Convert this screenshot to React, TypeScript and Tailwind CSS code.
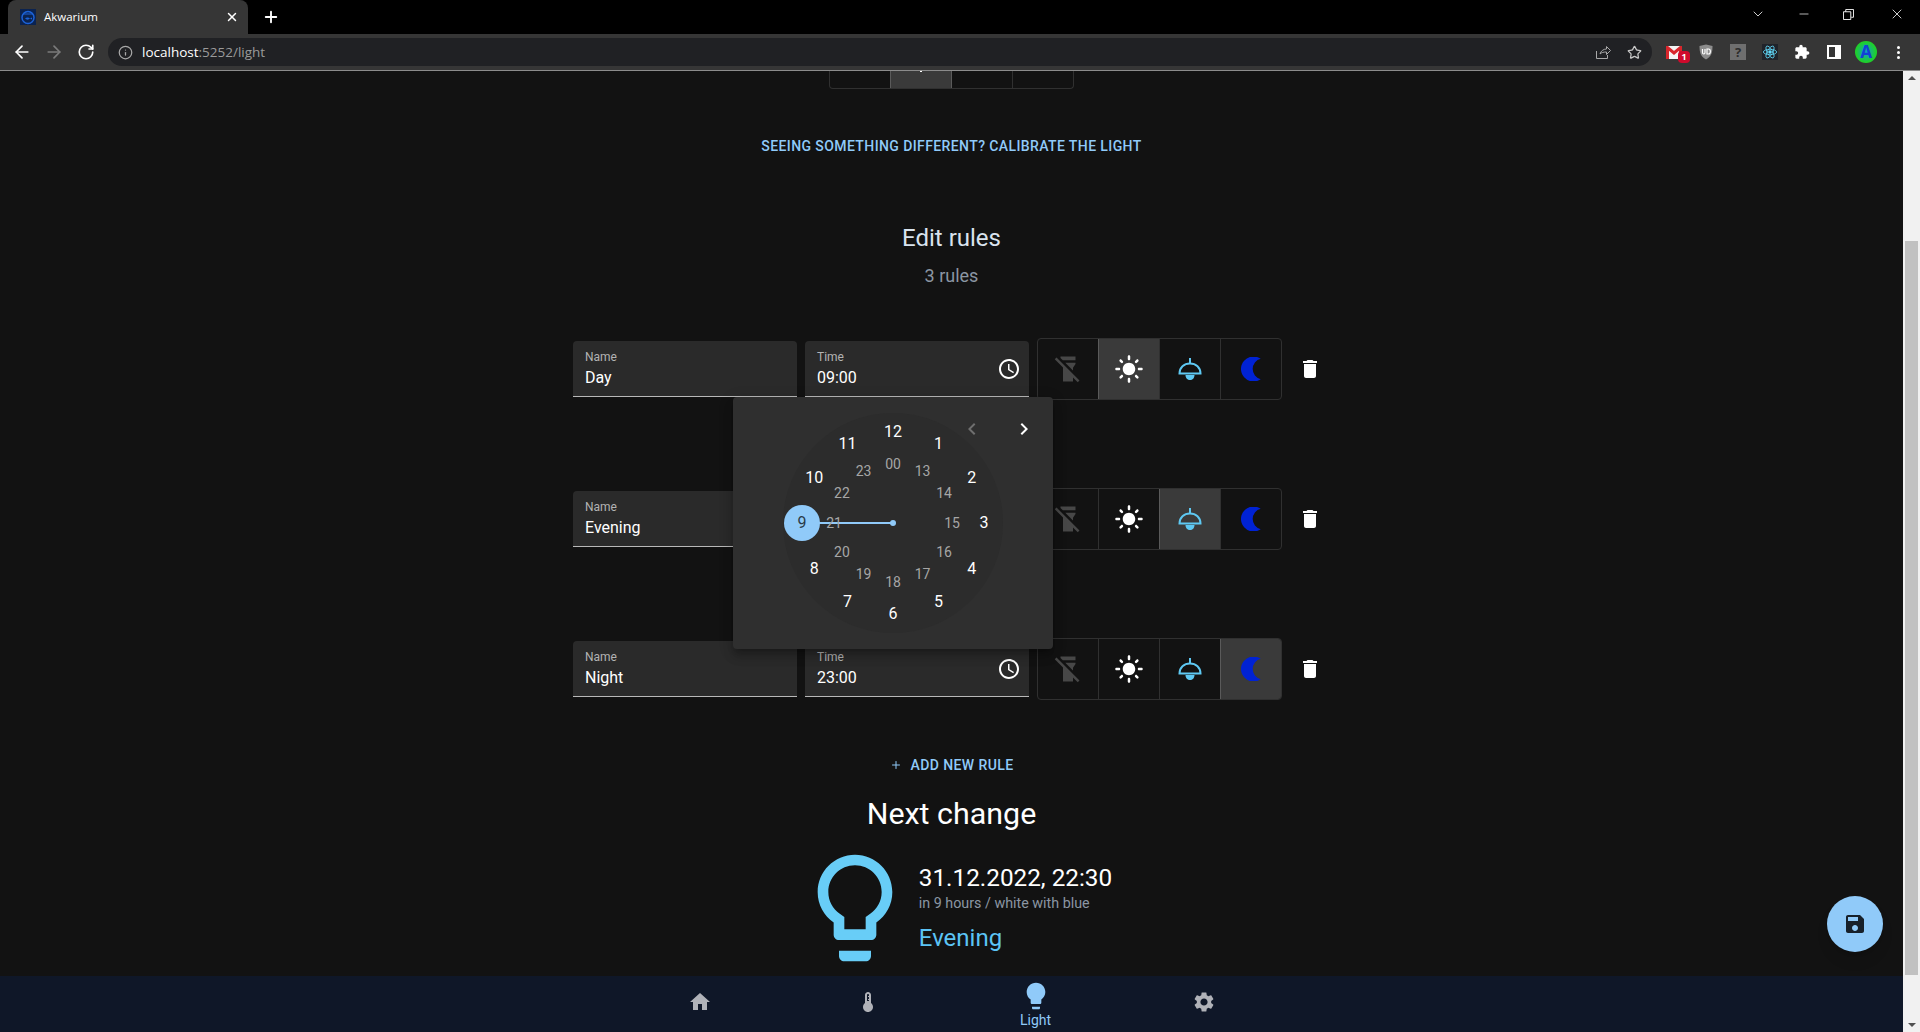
import React from 'react';
import { ArrowLeft, ArrowRight, RotateCw, Info, Star, Plus, X, ChevronDown, Minus } from 'lucide-react';

const paths = {
  sun: 'M12 7c-2.76 0-5 2.24-5 5s2.24 5 5 5 5-2.24 5-5-2.24-5-5-5zM2 13h2c.55 0 1-.45 1-1s-.45-1-1-1H2c-.55 0-1 .45-1 1s.45 1 1 1zm18 0h2c.55 0 1-.45 1-1s-.45-1-1-1h-2c-.55 0-1 .45-1 1s.45 1 1 1zM11 2v2c0 .55.45 1 1 1s1-.45 1-1V2c0-.55-.45-1-1-1s-1 .45-1 1zm0 18v2c0 .55.45 1 1 1s1-.45 1-1v-2c0-.55-.45-1-1-1s-1 .45-1 1zM5.99 4.58c-.39-.39-1.03-.39-1.41 0-.39.39-.39 1.03 0 1.41l1.06 1.06c.39.39 1.03.39 1.41 0s.39-1.03 0-1.41L5.99 4.58zm12.37 12.37c-.39-.39-1.03-.39-1.41 0-.39.39-.39 1.03 0 1.41l1.06 1.06c.39.39 1.03.39 1.41 0 .39-.39.39-1.03 0-1.41l-1.06-1.06zm1.06-10.96c.39-.39.39-1.03 0-1.41-.39-.39-1.03-.39-1.41 0l-1.06 1.06c-.39.39-.39 1.03 0 1.41s1.03.39 1.41 0l1.06-1.06zM7.05 18.36c.39-.39.39-1.03 0-1.41-.39-.39-1.03-.39-1.41 0l-1.06 1.06c-.39.39-.39 1.03 0 1.41s1.03.39 1.41 0l1.06-1.06z',
  flashOff: 'M18 5V2H6v1.17L7.83 5zM16 11l2-3V7H9.83L16 13.17zM2.81 2.81 1.39 4.22 8 10.83V22h8v-3.17l3.78 3.78 1.41-1.41L2.81 2.81z',
  trash: 'M6 19c0 1.1.9 2 2 2h8c1.1 0 2-.9 2-2V7H6v12zM19 4h-3.5l-1-1h-5l-1 1H5v2h14V4z',
  clock: 'M11.99 2C6.47 2 2 6.48 2 12s4.47 10 9.99 10C17.52 22 22 17.52 22 12S17.52 2 11.99 2zM12 20c-4.42 0-8-3.58-8-8s3.58-8 8-8 8 3.58 8 8-3.58 8-8 8zm.5-13H11v6l5.25 3.15.75-1.23-4.5-2.67z',
  bulbOutline: 'M9 21c0 .55.45 1 1 1h4c.55 0 1-.45 1-1v-1H9v1zm3-19C8.14 2 5 5.14 5 9c0 2.38 1.19 4.47 3 5.74V17c0 .55.45 1 1 1h6c.55 0 1-.45 1-1v-2.26c1.81-1.27 3-3.36 3-5.74 0-3.86-3.14-7-7-7zm2.85 11.1l-.85.6V16h-4v-2.3l-.85-.6C7.8 12.16 7 10.63 7 9c0-2.76 2.24-5 5-5s5 2.24 5 5c0 1.63-.8 3.16-2.15 4.1z',
  bulb: 'M9 21c0 .5.4 1 1 1h4c.6 0 1-.5 1-1v-1H9v1zm3-19C8.1 2 5 5.1 5 9c0 2.4 1.2 4.5 3 5.7V17c0 .5.4 1 1 1h6c.6 0 1-.5 1-1v-2.3c1.8-1.3 3-3.4 3-5.7 0-3.9-3.1-7-7-7z',
  home: 'M10 20v-6h4v6h5v-8h3L12 3 2 12h3v8z',
  thermo: 'M15 13V5c0-1.66-1.34-3-3-3S9 3.34 9 5v8c-1.21.91-2 2.37-2 4 0 2.76 2.24 5 5 5s5-2.24 5-5c0-1.63-.79-3.09-2-4zm-4-2V5c0-.55.45-1 1-1s1 .45 1 1v1h-1v1h1v2h-1v1h1v1h-2z',
  gear: 'M19.14 12.94c.04-.3.06-.61.06-.94 0-.32-.02-.64-.07-.94l2.03-1.58c.18-.14.23-.41.12-.61l-1.92-3.32c-.12-.22-.37-.29-.59-.22l-2.39.96c-.5-.38-1.03-.7-1.62-.94l-.36-2.54c-.04-.24-.24-.41-.48-.41h-3.84c-.24 0-.43.17-.47.41l-.36 2.54c-.59.24-1.13.57-1.62.94l-2.39-.96c-.22-.08-.47 0-.59.22L2.74 8.87c-.12.21-.08.47.12.61l2.03 1.58c-.05.3-.09.63-.09.94s.02.64.07.94l-2.03 1.58c-.18.14-.23.41-.12.61l1.92 3.32c.12.22.37.29.59.22l2.39-.96c.5.38 1.03.7 1.62.94l.36 2.54c.05.24.24.41.48.41h3.84c.24 0 .44-.17.47-.41l.36-2.54c.59-.24 1.13-.56 1.62-.94l2.39.96c.22.08.47 0 .59-.22l1.92-3.32c.12-.22.07-.47-.12-.61l-2.01-1.58zM12 15.6c-1.98 0-3.6-1.62-3.6-3.6s1.62-3.6 3.6-3.6 3.6 1.62 3.6 3.6-1.62 3.6-3.6 3.6z',
  save: 'M17 3H5c-1.11 0-2 .9-2 2v14c0 1.1.89 2 2 2h14c1.1 0 2-.9 2-2V7l-4-4zm-5 16c-1.66 0-3-1.34-3-3s1.34-3 3-3 3 1.34 3 3-1.34 3-3 3zm3-10H5V5h10v4z',
  left: 'M15.41 7.41 14 6l-6 6 6 6 1.41-1.41L10.83 12z',
  right: 'M10 6 8.59 7.41 13.17 12l-4.58 4.59L10 18l6-6z',
  puzzle: 'M20.5 11H19V7c0-1.1-.9-2-2-2h-4V3.5C13 2.12 11.88 1 10.5 1S8 2.12 8 3.5V5H4c-1.1 0-1.99.9-1.99 2v3.8H3.5c1.49 0 2.7 1.21 2.7 2.7s-1.21 2.7-2.7 2.7H2V20c0 1.1.9 2 2 2h3.8v-1.5c0-1.49 1.21-2.7 2.7-2.7 1.49 0 2.7 1.21 2.7 2.7V22H17c1.1 0 2-.9 2-2v-4h1.5c1.38 0 2.5-1.12 2.5-2.5S21.88 11 20.5 11z',
};

const Icon: React.FC<{ d: string; className?: string }> = ({ d, className }) => (
  <svg viewBox="0 0 24 24" fill="currentColor" className={className}>
    <path d={d} />
  </svg>
);

const LampIcon = () => (
  <svg viewBox="0 0 24 24" className="w-6 h-6 text-[#5ec8f2]" fill="none" stroke="currentColor" strokeWidth="2">
    <path d="M12 1v5" />
    <path d="M1.500 16.500C1.500 10.500 6 6.500 12 6.500s10.500 4 10.500 10z" />
    <path d="M7.500 18h9c0 3-2 5-4.500 5s-4.500-2-4.500-5z" fill="currentColor" stroke="none" />
  </svg>
);

const MoonIcon = () => (
  <svg viewBox="0 0 24 24" className="w-6 h-6 text-[#0022d4]" fill="currentColor">
    <path d="M21.700 1.800A12.500 12.500 0 1 0 21.700 22.200A10.500 10.500 0 0 1 21.700 1.800Z" />
  </svg>
);

const Field: React.FC<{ label: string; value: string; clock?: boolean }> = ({ label, value, clock }) => (
  <div className="w-[224px] h-[56px] bg-[#2a2a2a] rounded-t border-b border-[#b8b8b8] pl-3 pr-[8px] flex items-center justify-between">
    <div className="flex flex-col pt-[3px]">
      <span className="text-[12px] leading-[14px] text-[#b3b3b3]">{label}</span>
      <span className="mt-[2px] text-[16px] leading-[24px] text-white">{value}</span>
    </div>
    {clock && <Icon d={paths.clock} className="w-6 h-6 text-white" />}
  </div>
);

const ToggleGroup: React.FC<{ active: number }> = ({ active }) => {
  const items = [
    <Icon key="a" d={paths.flashOff} className="w-[30px] h-[30px] text-[#474747]" />,
    <Icon key="b" d={paths.sun} className="w-[30px] h-[30px] text-white" />,
    <LampIcon key="c" />,
    <MoonIcon key="d" />,
  ];
  return (
    <div className="flex h-[62px] w-[245px] rounded border border-[#303030] overflow-hidden">
      {items.map((item, i) => (
        <div
          key={i}
          className={
            'flex-1 flex items-center justify-center ' +
            (i > 0 ? 'border-l ' : '') +
            (i === active ? 'bg-[#3a3a3a] border-[#5a5a5a]' : 'border-[#303030]')
          }
        >
          {item}
        </div>
      ))}
    </div>
  );
};

const Rule: React.FC<{ name: string; time: string; active: number }> = ({ name, time, active }) => (
  <div className="flex items-center gap-2 h-[62px]">
    <Field label="Name" value={name} />
    <Field label="Time" value={time} clock />
    <ToggleGroup active={active} />
    <button className="w-10 h-10 flex items-center justify-center text-white">
      <Icon d={paths.trash} className="w-6 h-6" />
    </button>
  </div>
);

const ClockNumber: React.FC<{ value: string; pos: number; radius: number; inner?: boolean; selected?: boolean }> = ({
  value,
  pos,
  radius,
  inner,
  selected,
}) => {
  const angle = (pos * Math.PI) / 6;
  return (
    <span
      className={
        'absolute w-8 h-8 -ml-4 -mt-4 flex items-center justify-center ' +
        (selected ? 'text-[16px] text-[#2a3a48]' : inner ? 'text-[14px] text-[#a6a6a6]' : 'text-[16px] text-white')
      }
      style={{ left: 110 + radius * Math.sin(angle), top: 110 - radius * Math.cos(angle) }}
    >
      {value}
    </span>
  );
};

const TimePopup = () => (
  <div className="absolute left-[160px] top-[59px] w-[320px] h-[252px] bg-[#2f2f2f] rounded shadow-[0_5px_5px_-3px_rgba(0,0,0,0.2),0_8px_10px_1px_rgba(0,0,0,0.14),0_3px_14px_2px_rgba(0,0,0,0.12)] flex items-center justify-center">
    <div className="relative w-[220px] h-[220px] rounded-full bg-[#2c2c2c]">
      <div className="absolute left-[36px] top-[109px] w-[74px] h-[2px] bg-[#90caf9]" />
      <div className="absolute left-[107px] top-[107px] w-[6px] h-[6px] rounded-full bg-[#90caf9]" />
      <div className="absolute left-[1px] top-[92px] w-9 h-9 rounded-full bg-[#90caf9]" />
      {['12', '1', '2', '3', '4', '5', '6', '7', '8', '9', '10', '11'].map((n, i) => (
        <ClockNumber key={n} value={n} pos={i} radius={91} selected={n === '9'} />
      ))}
      {['00', '13', '14', '15', '16', '17', '18', '19', '20', '21', '22', '23'].map((n, i) => (
        <ClockNumber key={n} value={n} pos={i} radius={59} inner />
      ))}
    </div>
    <Icon d={paths.left} className="absolute left-[227px] top-[20px] w-6 h-6 text-[#6f6f6f]" />
    <Icon d={paths.right} className="absolute left-[279px] top-[20px] w-6 h-6 text-white" />
  </div>
);

const NavItem: React.FC<{ d: string; label?: string; active?: boolean; iconClass: string }> = ({ d, label, active, iconClass }) => (
  <div className={'w-[168px] flex flex-col items-center justify-center ' + (active ? 'text-[#90caf9]' : 'text-[#b0b2b8] pb-[4px]')}>
    <Icon d={d} className={iconClass} />
    {label && <span className="text-[14px] leading-[16px] mt-[1px]">{label}</span>}
  </div>
);

const ExtSlot: React.FC<{ children: React.ReactNode }> = ({ children }) => (
  <div className="relative w-8 h-full flex items-center justify-center">{children}</div>
);

const BrowserChrome = () => (
  <div className="h-[71px] shrink-0 bg-black font-['Open_Sans','Liberation_Sans',sans-serif]">
    <div className="h-[34px] flex items-end">
      <div className="ml-2 w-[240px] h-[34px] bg-[#363636] rounded-t-lg flex items-center pl-3 pr-[9px]">
        <svg viewBox="0 0 16 16" className="w-4 h-4" fill="none">
          <rect width="16" height="16" fill="#0b2350" />
          <circle cx="8" cy="8.500" r="6" stroke="#1c62d8" strokeWidth="1.500" />
          <path d="M3 5h10" stroke="#1c62d8" />
          <path d="M5 9.500c1.500-1.500 3.500-1.500 5 0l2-1v2l-2-1c-1.500 1.500-3.500 1.500-5 0z" fill="#1c62d8" />
        </svg>
        <span className="ml-2 text-[11.500px] text-white flex-1">Akwarium</span>
        <X className="w-[14px] h-[14px] text-white" strokeWidth={2.5} />
      </div>
      <Plus className="ml-[14px] mb-[8px] w-[18px] h-[18px] text-white" strokeWidth={2.5} />
      <div className="flex-1" />
      <div className="flex items-center h-[28px] self-start text-white">
        <ChevronDown className="w-[16px] h-[16px] mr-[31px]" strokeWidth={1.2} />
        <Minus className="w-[14px] h-[14px] mr-[32px]" strokeWidth={1.2} />
        <svg viewBox="0 0 12 12" className="w-[11px] h-[11px] mr-[35px]" fill="none" stroke="currentColor">
          <path d="M.5 3h8v8.500h-8zM3 3V.5h8.500V9H9" />
        </svg>
        <X className="w-[16px] h-[16px] mr-[15px]" strokeWidth={1.2} />
      </div>
    </div>
    <div className="h-[37px] bg-[#363636] border-b border-[#8c8c8c] flex items-center text-white">
      <ArrowLeft className="ml-[12px] w-[20px] h-[20px]" strokeWidth={2} />
      <ArrowRight className="ml-[12px] w-[20px] h-[20px] text-[#7b7b7b]" strokeWidth={2} />
      <RotateCw className="ml-[13px] w-[18px] h-[18px]" strokeWidth={2.2} />
      <div className="ml-[13px] w-[1544px] h-[28px] rounded-full bg-[#202124] flex items-center px-[10px]">
        <Info className="w-[15px] h-[15px] text-[#a8a8a8]" />
        <span className="ml-[9px] text-[13.500px]">localhost<span className="text-[#9a9a9a]">:5252/light</span></span>
        <div className="flex-1" />
        <svg viewBox="0 0 16 16" className="w-4 h-4 text-[#a8a8a8] mr-[16px]" fill="none" stroke="currentColor" strokeWidth="1">
          <path d="M1.500 7v7.500h11V11M5 10c.8-3 3.500-5 6.500-5V2.500l4 4-4 4V8C8.500 8 6.500 8.500 5 10z" />
        </svg>
        <Star className="w-[15px] h-[15px] text-[#c8c8c8]" strokeWidth={2} />
      </div>
      <div className="ml-[6px] flex h-full items-center">
        <ExtSlot>
          <svg viewBox="0 0 16 13" className="w-4 h-[13px]">
            <rect width="16" height="13" fill="#f4f4f4" />
            <path d="M1.500 13V1.500L8 7l6.500-5.500V13" fill="none" stroke="#d8262c" strokeWidth="3" />
          </svg>
          <span className="absolute left-[20px] top-[17px] w-3 h-3 rounded-sm bg-[#cf0a2c] text-white text-[9px] leading-[12px] text-center font-bold">1</span>
        </ExtSlot>
        <ExtSlot>
          <svg viewBox="0 0 16 16" className="w-4 h-4 text-[#8c8c8c]" fill="currentColor">
            <path d="M8 .5l6.500 1.500c0 6.500-1 10.500-6.500 13.500C2.500 12.500 1.500 8.500 1.500 2z" />
            <path d="M4.500 5v3.500c0 2 2.500 2 2.500 0V5M9 5h1.500c2.500 0 2.500 5 0 5H9z" fill="none" stroke="#fff" strokeWidth="1.200" />
          </svg>
        </ExtSlot>
        <ExtSlot>
          <div className="w-4 h-4 bg-[#6f6f6f] text-[#2c2c2c] text-[13px] leading-[16px] text-center font-bold">?</div>
        </ExtSlot>
        <ExtSlot>
          <div className="w-4 h-4 bg-[#20232a] flex items-center justify-center">
            <svg viewBox="-12 -12 24 24" className="w-4 h-4 text-[#61dafb]" fill="none" stroke="currentColor" strokeWidth="1.200">
              <ellipse rx="10" ry="4" />
              <ellipse rx="10" ry="4" transform="rotate(60)" />
              <ellipse rx="10" ry="4" transform="rotate(120)" />
              <circle r="2" fill="currentColor" />
            </svg>
          </div>
        </ExtSlot>
        <ExtSlot>
          <Icon d={paths.puzzle} className="w-4 h-4 text-white" />
        </ExtSlot>
        <ExtSlot>
          <div className="w-[14px] h-[14px] border-2 border-white border-r-[6px]" />
        </ExtSlot>
        <ExtSlot>
          <div className="w-[22px] h-[22px] rounded-full bg-[radial-gradient(circle,#0fa0c8_0%,#1fd02a_65%)] flex items-center justify-center text-[#1240d8] text-[17px] font-bold">A</div>
        </ExtSlot>
        <ExtSlot>
          <div className="flex flex-col gap-[2px]">
            <div className="w-[3px] h-[3px] rounded-full bg-white" />
            <div className="w-[3px] h-[3px] rounded-full bg-white" />
            <div className="w-[3px] h-[3px] rounded-full bg-white" />
          </div>
        </ExtSlot>
      </div>
    </div>
  </div>
);

const Scrollbar = () => (
  <div className="w-[17px] shrink-0 bg-[#f1f1f1] flex flex-col items-center pt-[5px] pb-[5px]">
    <div className="w-0 h-0 border-x-[4px] border-x-transparent border-b-[4px] border-b-[#505050]" />
    <div className="w-[13px] h-[734px] bg-[#c1c1c1] mt-[161px]" />
    <div className="flex-1" />
    <div className="w-0 h-0 border-x-[4px] border-x-transparent border-t-[4px] border-t-[#505050]" />
  </div>
);

const App = () => (
  <div className="h-[1032px] w-[1920px] flex flex-col overflow-hidden bg-[#121212] font-['Roboto',sans-serif]">
    <BrowserChrome />
    <div className="flex-1 flex min-h-0">
      <div className="relative flex-1 flex flex-col min-w-0">
        <main className="flex-1 flex flex-col items-center overflow-hidden">
          <div className="flex h-[18px] w-[245px] shrink-0 rounded-b border-x border-b border-[#303030] overflow-hidden">
            <div className="flex-1" />
            <div className="flex-1 bg-[#3a3a3a] border-l border-[#5a5a5a] flex justify-center">
              <div className="w-[2px] h-[1px] bg-white" />
            </div>
            <div className="flex-1 border-l border-[#5a5a5a]" />
            <div className="flex-1 border-l border-[#303030]" />
          </div>
          <div className="mt-[47px] text-[14px] leading-[20px] font-medium tracking-[0.4px] text-[#90caf9]">
            SEEING SOMETHING DIFFERENT? CALIBRATE THE LIGHT
          </div>
          <h2 className="mt-[66px] text-[24px] leading-[32px] text-[#d9e3ee]">Edit rules</h2>
          <div className="mt-[8px] text-[18px] leading-[28px] text-[#8b96a3]">3 rules</div>
          <div className="relative mt-[48px] flex flex-col gap-[88px]">
            <Rule name="Day" time="09:00" active={1} />
            <Rule name="Evening" time="21:00" active={2} />
            <Rule name="Night" time="23:00" active={3} />
            <TimePopup />
          </div>
          <button className="mt-[55px] flex items-center gap-[9px] text-[14px] leading-[20px] font-medium tracking-[0.4px] text-[#90caf9]">
            <Plus className="w-[12px] h-[12px]" strokeWidth={2} />
            ADD NEW RULE
          </button>
          <h3 className="mt-[19px] text-[30.400px] leading-[40px] text-white">Next change</h3>
          <div className="mt-[10px] flex items-start">
            <Icon d={paths.bulbOutline} className="w-32 h-32 text-[#68cdf7]" />
            <div className="flex flex-col">
              <span className="mt-[18px] text-[24.300px] leading-[32px] text-white">31.12.2022, 22:30</span>
              <span className="text-[14.300px] leading-[18px] text-[#8b96a3]">in 9 hours / white with blue</span>
              <span className="mt-[10px] text-[24px] leading-[32px] text-[#5cc4f5]">Evening</span>
            </div>
          </div>
        </main>
        <nav className="h-[56px] shrink-0 bg-[#0f1728] flex justify-center">
          <NavItem d={paths.home} iconClass="w-6 h-6" />
          <NavItem d={paths.thermo} iconClass="w-6 h-6" />
          <NavItem d={paths.bulb} label="Light" active iconClass="w-[32px] h-[32px] -mb-[1px]" />
          <NavItem d={paths.gear} iconClass="w-6 h-6" />
        </nav>
        <button className="absolute left-[1827px] top-[825px] w-14 h-14 rounded-full bg-[#90caf9] flex items-center justify-center text-[#17202a] shadow-lg">
          <Icon d={paths.save} className="w-6 h-6" />
        </button>
      </div>
      <Scrollbar />
    </div>
  </div>
);

export default App;
